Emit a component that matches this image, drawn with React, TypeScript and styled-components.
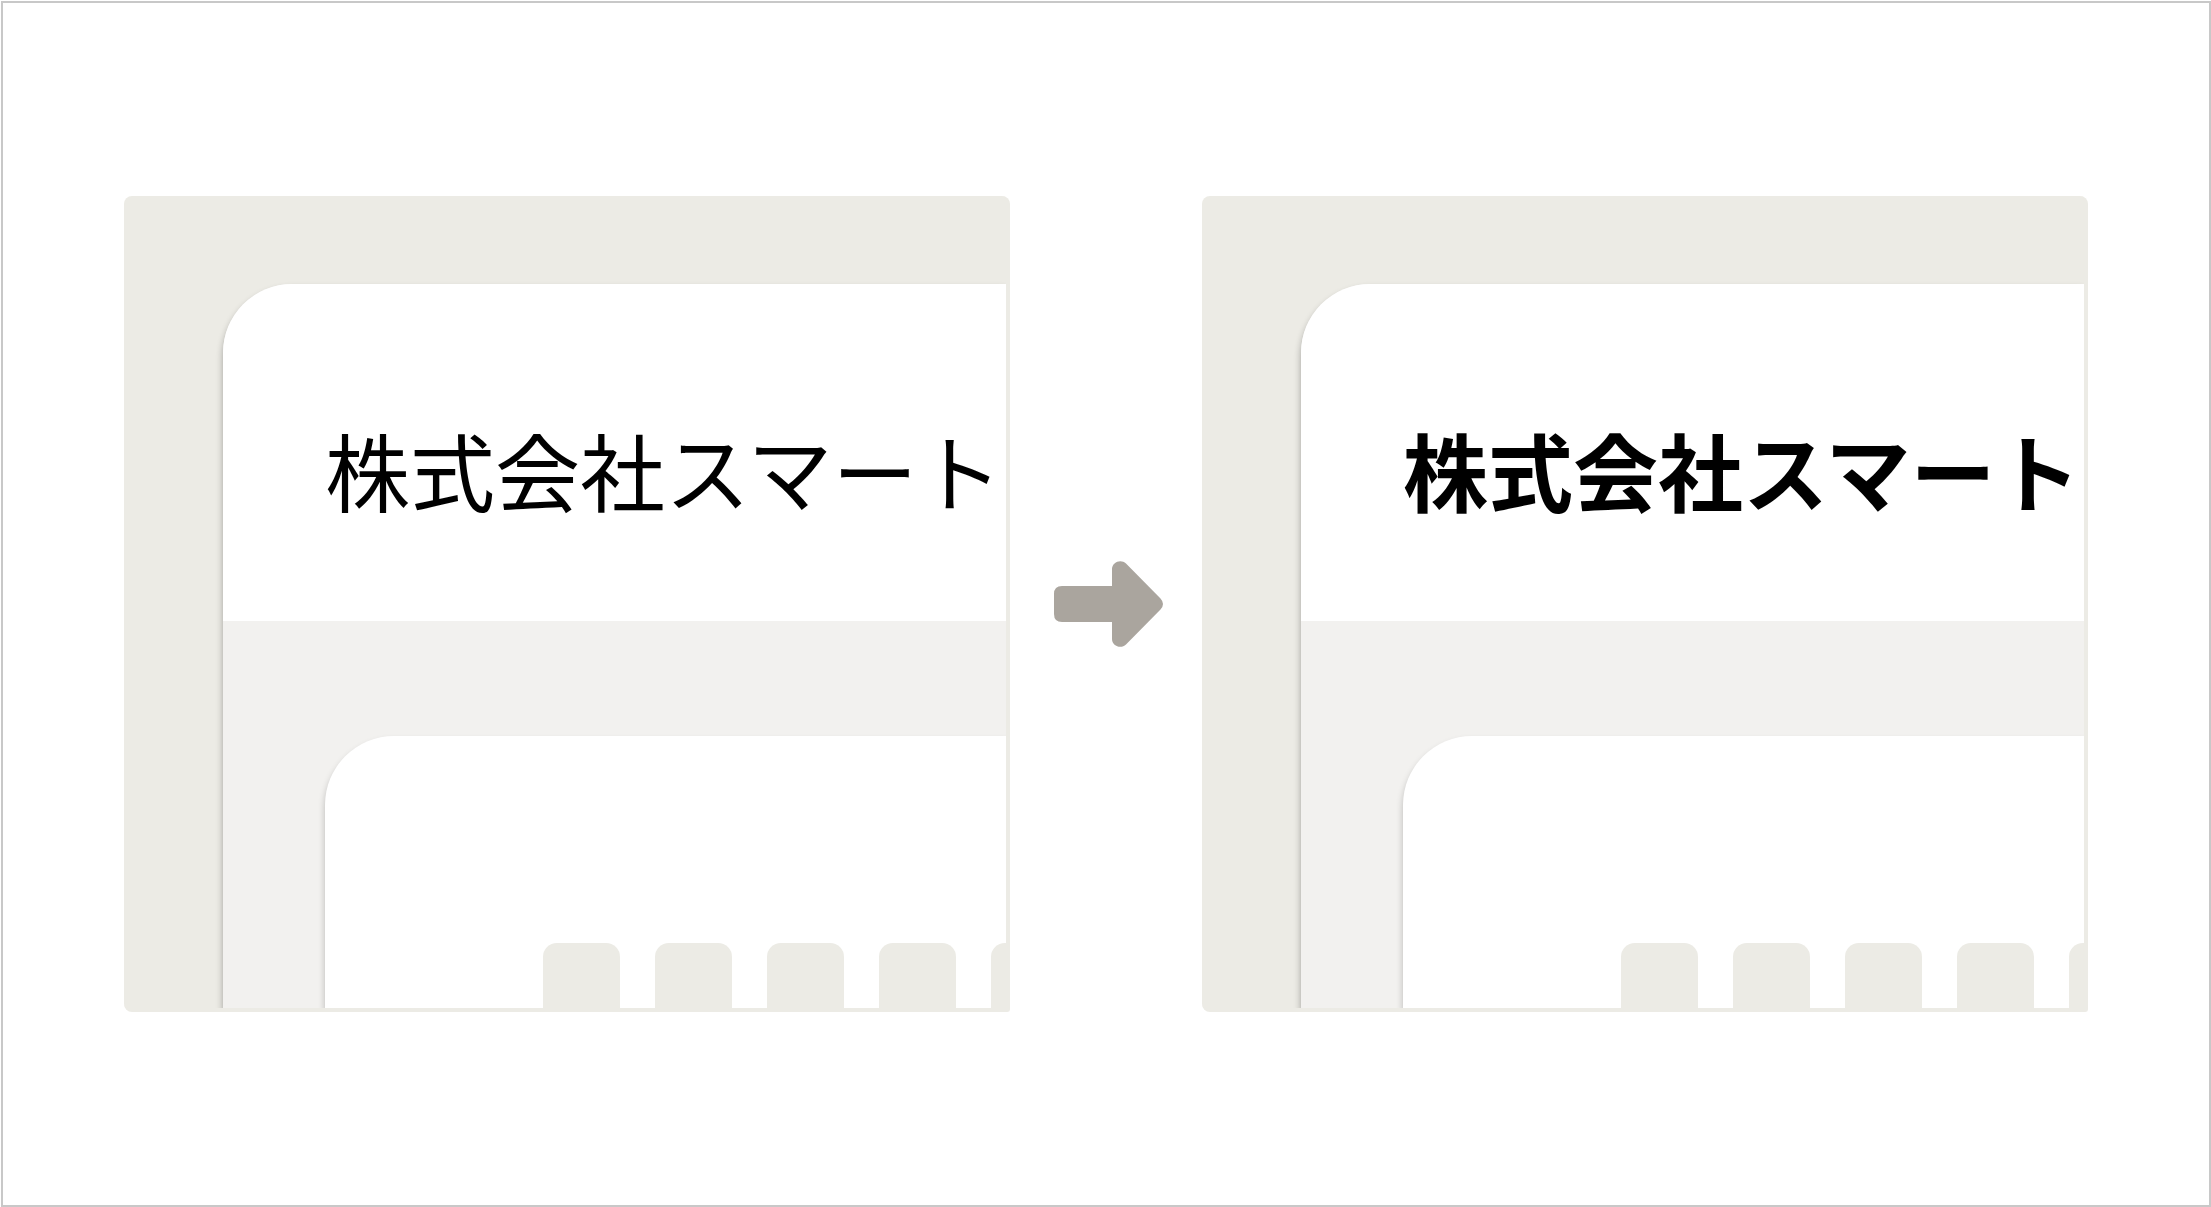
import React from "react";
import styled, { createGlobalStyle } from "styled-components";

const GlobalStyle = createGlobalStyle`
  *, *::before, *::after { box-sizing: border-box; }
  body { margin: 0; background: #fff; }
`;

const Frame = styled.main`
  display: grid;
  grid-template-columns: minmax(0, 1fr) auto minmax(0, 1fr);
  align-items: center;
  min-height: calc(100vh - 1px);
  margin: 1px 0 0 1px;
  padding: 0 121px;
  border: 2px solid #c8c8c8;
  background: #fff;
  font-family: "Noto Sans CJK JP", sans-serif;
`;

const Panel = styled.section`
  display: flex;
  padding: 88px 0 0 99px;
  border: solid #ecebe5;
  border-width: 0 4px 4px 0;
  border-radius: 8px 8px 3px 8px;
  background: #ecebe5;
  overflow: hidden;
`;

const Window = styled.div`
  flex: 1;
  min-width: 0;
  border-top-left-radius: 69px;
  background: #f2f1ef;
  box-shadow: 0 5px 7px rgba(0, 0, 0, 0.32);
`;

const Header = styled.header`
  display: flex;
  align-items: center;
  height: 337px;
  padding: 32px 0 0 102px;
  border-top-left-radius: 69px;
  background: #fff;
`;

const Title = styled.h2<{ $bold?: boolean }>`
  margin: 0;
  color: #000;
  font-size: 85px;
  font-weight: ${({ $bold }) => ($bold ? 700 : 400)};
  line-height: 120px;
  white-space: nowrap;
`;

const Body = styled.div`
  display: flex;
  padding: 115px 0 0 102px;
  overflow: hidden;
`;

const Card = styled.div`
  flex: 1;
  min-width: 0;
  display: flex;
  align-items: flex-end;
  gap: 35px;
  height: 272px;
  padding-left: 218px;
  border-top-left-radius: 69px;
  background: #fff;
  box-shadow: 0 5px 7px rgba(0, 0, 0, 0.24);
  overflow: hidden;
`;

const Block = styled.span`
  flex: none;
  width: 77px;
  height: 65px;
  border-radius: 14px 14px 0 0;
  background: #ecebe5;
`;

const Arrow = styled.svg`
  display: block;
  width: 192px;
  height: 88px;
`;

const blocks = [0, 1, 2, 3, 4];

function Preview({ bold }: { bold?: boolean }) {
  return (
    <Panel>
      <Window>
        <Header>
          <Title $bold={bold}>株式会社スマート</Title>
        </Header>
        <Body>
          <Card>
            {blocks.map((id) => (
              <Block key={id} />
            ))}
          </Card>
        </Body>
      </Window>
    </Panel>
  );
}

export default function App() {
  return (
    <>
      <GlobalStyle />
      <Frame>
        <Preview />
        <Arrow viewBox="0 0 192 88" aria-hidden="true">
          <path
            fill="#aaa59e"
            d="M52 26H102V9C102 2 111 -1.500 116 3.500L150.500 38.500Q155.500 44 150.500 49.500L116 84.500C111 89.500 102 86 102 79V62H52Q44 62 44 54V34Q44 26 52 26Z"
          />
        </Arrow>
        <Preview bold />
      </Frame>
    </>
  );
}
